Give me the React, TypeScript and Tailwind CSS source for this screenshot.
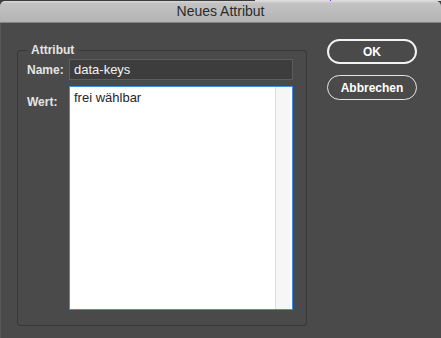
const font = { fontFamily: '"Liberation Sans", Arial, sans-serif' };

function PillButton({ label, primary }: { label: string; primary?: boolean }) {
  return (
    <button
      type="button"
      className={
        primary
          ? "flex h-[25px] w-[90px] items-center justify-center rounded-full border-2 border-[#f2f2f2] text-[12px] font-bold text-white"
          : "flex h-[25px] w-[90px] items-center justify-center rounded-full border border-[#e6e6e6] text-[12px] font-bold text-white"
      }
    >
      {label}
    </button>
  );
}

export default function App() {
  return (
    <div className="h-[338px] w-[441px] overflow-hidden bg-[#3c3c3c]" style={font}>
      <div className="flex h-px">
        <div className="w-[255px] bg-[#3a3a3a]" />
        <div className="flex flex-1 bg-[#dcdcdc]">
          <div className="w-[75px]" />
          <div className="w-px bg-[#8a2be2]" />
        </div>
      </div>

      <div className="flex h-[337px] flex-col overflow-hidden rounded-t-[5px]">
        <div className="flex h-[22px] items-center justify-center border-b border-[#858585] bg-[linear-gradient(180deg,#d9d9d9_0%,#c2c2c2_12%,#b4b4b4_100%)] text-[14px] text-[#2b2b2b]">
          Neues Attribut
        </div>

        <div className="flex flex-1 border-l border-[#575757] bg-[#4a4a4a] pl-[16px]">
          <fieldset className="mt-[20px] h-[283px] w-[290px] rounded-[3px] border border-[#383838] pb-[14px] pl-[9px] pr-[13px]">
            <legend className="px-[4px] text-[12px] font-bold leading-[15px] text-[#e4e4e4]">
              Attribut
            </legend>
            <div className="mt-[1px] flex items-center">
              <span className="w-[42px] text-[12px] font-bold text-[#e4e4e4]">Name:</span>
              <div className="flex h-[21px] flex-1 items-center border border-[#5d5d5d] bg-[#3d3d3d] pl-[4px] text-[13px] text-[#f4f4f4]">
                data-keys
              </div>
            </div>
            <div className="mt-[6px] flex">
              <span className="w-[42px] pt-[7px] text-[12px] font-bold text-[#e4e4e4]">Wert:</span>
              <div className="flex h-[224px] flex-1 border border-[#3f8ddf] bg-white">
                <div className="flex-1 pl-[4px] pt-[1px] text-[13px] text-[#262626]">
                  frei wählbar
                </div>
                <div className="w-[15px] border-l border-[#dedede] bg-[#f6f6f6]" />
                <div className="w-[2px] bg-white" />
              </div>
            </div>
          </fieldset>

          <div className="ml-[20px] mt-[16px] flex flex-col gap-[11px]">
            <PillButton label="OK" primary />
            <PillButton label="Abbrechen" />
          </div>
        </div>
      </div>
    </div>
  );
}
